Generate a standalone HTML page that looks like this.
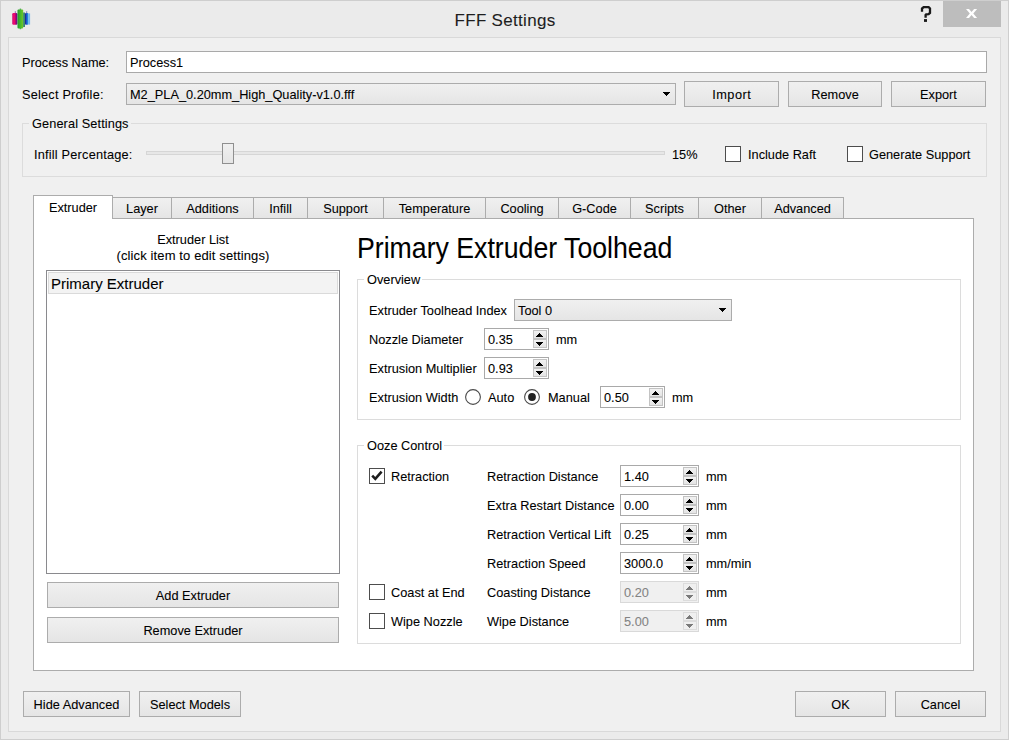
<!DOCTYPE html>
<html><head><meta charset="utf-8"><style>
html,body{margin:0;padding:0;width:1009px;height:740px;overflow:hidden;background:#ebebeb}
body{position:relative;font-family:'Liberation Sans', sans-serif;color:#000}
body>div{position:absolute}
.t{position:absolute;white-space:nowrap;line-height:1;font-size:12.75px;-webkit-text-stroke:0.08px currentColor}
</style></head><body>
<div style="left:0px;top:0px;width:1009px;height:740px;box-sizing:border-box;border:1px solid #cecece;background:#ebebeb;"></div>
<div style="left:8px;top:37px;width:993px;height:695px;box-sizing:border-box;border:1px solid #d9d9d9;background:#f0f0f0;"></div>
<svg style="position:absolute;left:0;top:0" width="40" height="32"><defs><linearGradient id="gp" x1="0" x2="1"><stop offset="0" stop-color="#d0187a"/><stop offset="0.45" stop-color="#f0066a"/><stop offset="0.7" stop-color="#a0087a"/><stop offset="1" stop-color="#50088a"/></linearGradient><linearGradient id="gg" x1="0" x2="1"><stop offset="0" stop-color="#1f9a2a"/><stop offset="0.5" stop-color="#46b82c"/><stop offset="1" stop-color="#70c828"/></linearGradient><linearGradient id="gb" x1="0" x2="1"><stop offset="0" stop-color="#1a1890"/><stop offset="0.5" stop-color="#2060d0"/><stop offset="1" stop-color="#20a8f0"/></linearGradient></defs><rect x="12.2" y="13" width="5.2" height="11.8" rx="1.2" fill="url(#gp)"/><rect x="14.8" y="11.2" width="1" height="2" fill="#9a60b0"/><rect x="17.5" y="9.6" width="5.7" height="18.8" rx="1" fill="url(#gg)"/><rect x="19.7" y="8.6" width="1.4" height="1.2" fill="#40a840"/><rect x="19.7" y="28.2" width="1.4" height="1" fill="#40a840"/><rect x="23.1" y="12.5" width="1.9" height="14.5" fill="#3a8a6a"/><rect x="25" y="13" width="3.5" height="11.8" rx="1" fill="url(#gb)"/><rect x="26.2" y="11.2" width="1" height="2" fill="#7a80c0"/><rect x="28.4" y="13.4" width="1.7" height="11.2" fill="#78b8ea"/></svg>
<div class="t" style="left:405px;top:12px;width:200px;text-align:center;font-size:17px;color:#1e1e1e;letter-spacing:0.3px">FFF Settings</div>
<svg style="position:absolute;left:900px;top:0" width="40" height="30"><path d="M922 11.8 L922 8.6 L923.6 7.1 L928.6 7.1 L930 8.5 L930 12.9 L928.6 14.2 L926.2 14.4 L925.6 15 L925.6 17.7" transform="translate(-900 0)" fill="none" stroke="#1a1a1a" stroke-width="2.3"/><rect x="24" y="19.1" width="3" height="2.8" fill="#1a1a1a"/></svg>
<div style="left:943px;top:1px;width:58px;height:26px;background:#bdbdbd;"></div>
<svg style="position:absolute;left:943px;top:0px" width="58" height="28"><path transform="translate(-943 0)" d="M966 8.9 L969 8.9 L971.55 11.9 L974.1 8.9 L977.1 8.9 L973.3 13.45 L977.1 18 L974.1 18 L971.55 15 L969 18 L966 18 L969.8 13.45Z" fill="#fff"/></svg>
<div class="t" style="left:22px;top:57px;font-size:12.75px;color:#000;">Process Name:</div>
<div style="left:126px;top:51px;width:861px;height:22px;box-sizing:border-box;border:1px solid #a9a9a9;background:#fff;"></div>
<div class="t" style="left:130px;top:57px;font-size:12.75px;color:#000;">Process1</div>
<div class="t" style="left:22px;top:89px;font-size:12.75px;color:#000;letter-spacing:0.2px">Select Profile:</div>
<div style="left:126px;top:83px;width:550px;height:22px;box-sizing:border-box;border:1px solid #acacac;background:linear-gradient(#f0f0f0,#e5e5e5);"></div>
<div class="t" style="left:130px;top:89px;font-size:12.75px;color:#000;">M2_PLA_0.20mm_High_Quality-v1.0.fff</div>
<svg style="position:absolute;left:663px;top:92px" width="7" height="4" shape-rendering="crispEdges"><path d="M0 0h7v1h-7z M1 1h5v1h-5z M2 2h3v1h-3z M3 3h1v1h-1z" fill="#000"/></svg>
<div style="left:684px;top:81px;width:95px;height:26px;box-sizing:border-box;border:1px solid #acacac;background:linear-gradient(#f0f0f0,#e5e5e5);"></div>
<div class="t" style="left:684px;top:89px;width:95px;text-align:center;font-size:12.75px;color:#000;letter-spacing:0.5px;text-indent:0.5px">Import</div>
<div style="left:788px;top:81px;width:94px;height:26px;box-sizing:border-box;border:1px solid #acacac;background:linear-gradient(#f0f0f0,#e5e5e5);"></div>
<div class="t" style="left:788px;top:89px;width:94px;text-align:center;font-size:12.75px;color:#000;">Remove</div>
<div style="left:891px;top:81px;width:95px;height:26px;box-sizing:border-box;border:1px solid #acacac;background:linear-gradient(#f0f0f0,#e5e5e5);"></div>
<div class="t" style="left:891px;top:89px;width:95px;text-align:center;font-size:12.75px;color:#000;">Export</div>
<div style="left:22px;top:123px;width:965px;height:54px;box-sizing:border-box;border:1px solid #dcdcdc;"></div>
<div class="t" style="left:29px;top:118px;padding:0 2px 0 3px;font-size:12.75px;letter-spacing:0.1px;background:#f0f0f0">General Settings</div>
<div class="t" style="left:34px;top:149px;font-size:12.75px;color:#000;letter-spacing:0.2px">Infill Percentage:</div>
<div style="left:146px;top:151px;width:519px;height:4px;box-sizing:border-box;border:1px solid #d6d6d6;background:#e7e7e7;"></div>
<div style="left:222px;top:143px;width:12px;height:21px;box-sizing:border-box;border:1px solid #8f8f8f;background:linear-gradient(#f0f0f0,#e5e5e5);"></div>
<div class="t" style="left:672px;top:149px;font-size:12.75px;color:#000;">15%</div>
<div style="left:725px;top:146px;width:16px;height:16px;box-sizing:border-box;border:1px solid #4d4d4d;background:#fff;"></div>
<div class="t" style="left:748px;top:149px;font-size:12.75px;color:#000;">Include Raft</div>
<div style="left:847px;top:146px;width:16px;height:16px;box-sizing:border-box;border:1px solid #4d4d4d;background:#fff;"></div>
<div class="t" style="left:869px;top:149px;font-size:12.75px;color:#000;">Generate Support</div>
<div style="left:33px;top:218px;width:941px;height:453px;box-sizing:border-box;border:1px solid #acacac;background:#fff;"></div>
<div style="left:112px;top:197px;width:60px;height:22px;box-sizing:border-box;border:1px solid #acacac;background:linear-gradient(#f0f0f0,#e5e5e5);"></div>
<div class="t" style="left:112px;top:203px;width:60px;text-align:center;font-size:12.75px;color:#000;">Layer</div>
<div style="left:171px;top:197px;width:83px;height:22px;box-sizing:border-box;border:1px solid #acacac;background:linear-gradient(#f0f0f0,#e5e5e5);"></div>
<div class="t" style="left:171px;top:203px;width:83px;text-align:center;font-size:12.75px;color:#000;">Additions</div>
<div style="left:253px;top:197px;width:55px;height:22px;box-sizing:border-box;border:1px solid #acacac;background:linear-gradient(#f0f0f0,#e5e5e5);"></div>
<div class="t" style="left:253px;top:203px;width:55px;text-align:center;font-size:12.75px;color:#000;">Infill</div>
<div style="left:307px;top:197px;width:77px;height:22px;box-sizing:border-box;border:1px solid #acacac;background:linear-gradient(#f0f0f0,#e5e5e5);"></div>
<div class="t" style="left:307px;top:203px;width:77px;text-align:center;font-size:12.75px;color:#000;">Support</div>
<div style="left:383px;top:197px;width:103px;height:22px;box-sizing:border-box;border:1px solid #acacac;background:linear-gradient(#f0f0f0,#e5e5e5);"></div>
<div class="t" style="left:383px;top:203px;width:103px;text-align:center;font-size:12.75px;color:#000;">Temperature</div>
<div style="left:485px;top:197px;width:74px;height:22px;box-sizing:border-box;border:1px solid #acacac;background:linear-gradient(#f0f0f0,#e5e5e5);"></div>
<div class="t" style="left:485px;top:203px;width:74px;text-align:center;font-size:12.75px;color:#000;">Cooling</div>
<div style="left:558px;top:197px;width:73px;height:22px;box-sizing:border-box;border:1px solid #acacac;background:linear-gradient(#f0f0f0,#e5e5e5);"></div>
<div class="t" style="left:558px;top:203px;width:73px;text-align:center;font-size:12.75px;color:#000;">G-Code</div>
<div style="left:630px;top:197px;width:69px;height:22px;box-sizing:border-box;border:1px solid #acacac;background:linear-gradient(#f0f0f0,#e5e5e5);"></div>
<div class="t" style="left:630px;top:203px;width:69px;text-align:center;font-size:12.75px;color:#000;">Scripts</div>
<div style="left:698px;top:197px;width:64px;height:22px;box-sizing:border-box;border:1px solid #acacac;background:linear-gradient(#f0f0f0,#e5e5e5);"></div>
<div class="t" style="left:698px;top:203px;width:64px;text-align:center;font-size:12.75px;color:#000;">Other</div>
<div style="left:761px;top:197px;width:83px;height:22px;box-sizing:border-box;border:1px solid #acacac;background:linear-gradient(#f0f0f0,#e5e5e5);"></div>
<div class="t" style="left:761px;top:203px;width:83px;text-align:center;font-size:12.75px;color:#000;">Advanced</div>
<div style="left:33px;top:195px;width:80px;height:24px;box-sizing:border-box;border:1px solid #acacac;border-bottom:none;background:#fff;"></div>
<div class="t" style="left:33px;top:202px;width:80px;text-align:center;font-size:12.75px;color:#000;">Extruder</div>
<div class="t" style="left:93px;top:234px;width:200px;text-align:center;font-size:12.75px;color:#000;">Extruder List</div>
<div class="t" style="left:93px;top:249px;width:200px;text-align:center;font-size:13px;color:#000;letter-spacing:0.12px">(click item to edit settings)</div>
<div style="left:46px;top:270px;width:294px;height:304px;box-sizing:border-box;border:1px solid #8a8a8e;background:#fff;"></div>
<div style="left:48px;top:272px;width:290px;height:22px;box-sizing:border-box;border:1px solid #dadada;background:#f3f3f3;"></div>
<div class="t" style="left:51px;top:276px;font-size:15px;color:#000;">Primary Extruder</div>
<div style="left:47px;top:582px;width:292px;height:26px;box-sizing:border-box;border:1px solid #acacac;background:linear-gradient(#f0f0f0,#e5e5e5);"></div>
<div class="t" style="left:47px;top:590px;width:292px;text-align:center;font-size:12.75px;color:#000;">Add Extruder</div>
<div style="left:47px;top:617px;width:292px;height:26px;box-sizing:border-box;border:1px solid #acacac;background:linear-gradient(#f0f0f0,#e5e5e5);"></div>
<div class="t" style="left:47px;top:625px;width:292px;text-align:center;font-size:12.75px;color:#000;">Remove Extruder</div>
<div class="t" style="left:357px;top:234px;font-size:29px;color:#000;transform:scaleX(0.92);transform-origin:0 0;">Primary Extruder Toolhead</div>
<div style="left:357px;top:279px;width:604px;height:141px;box-sizing:border-box;border:1px solid #dcdcdc;"></div>
<div class="t" style="left:364px;top:274px;padding:0 2px 0 3px;font-size:12.75px;letter-spacing:0px;background:#fff">Overview</div>
<div class="t" style="left:369px;top:305px;font-size:12.75px;color:#000;">Extruder Toolhead Index</div>
<div style="left:514px;top:299px;width:218px;height:22px;box-sizing:border-box;border:1px solid #acacac;background:linear-gradient(#f0f0f0,#e5e5e5);"></div>
<div class="t" style="left:518px;top:305px;font-size:12.75px;color:#000;">Tool 0</div>
<svg style="position:absolute;left:719px;top:308px" width="7" height="4" shape-rendering="crispEdges"><path d="M0 0h7v1h-7z M1 1h5v1h-5z M2 2h3v1h-3z M3 3h1v1h-1z" fill="#000"/></svg>
<div class="t" style="left:369px;top:334px;font-size:12.75px;color:#000;">Nozzle Diameter</div>
<div style="left:484px;top:328px;width:65px;height:22px;box-sizing:border-box;border:1px solid #a9a9a9;background:#fff;"></div>
<div style="left:533px;top:330px;width:14px;height:9px;box-sizing:border-box;border:1px solid #c3c3c3;background:linear-gradient(#f2f2f2,#e4e4e4);"></div>
<div style="left:533px;top:339px;width:14px;height:9px;box-sizing:border-box;border:1px solid #c3c3c3;background:linear-gradient(#f2f2f2,#e4e4e4);"></div>
<svg style="position:absolute;left:536px;top:333px" width="7" height="13" shape-rendering="crispEdges"><path d="M3 0h1v1h-1z M2 1h3v1h-3z M1 2h5v1h-5z M0 3h7v1h-7z M0 9h7v1h-7z M1 10h5v1h-5z M2 11h3v1h-3z M3 12h1v1h-1z" fill="#000"/></svg>
<div class="t" style="left:488px;top:334px;font-size:12.75px;color:#000;">0.35</div>
<div class="t" style="left:556px;top:334px;font-size:12.75px;color:#000;">mm</div>
<div class="t" style="left:369px;top:363px;font-size:12.75px;color:#000;">Extrusion Multiplier</div>
<div style="left:484px;top:357px;width:65px;height:22px;box-sizing:border-box;border:1px solid #a9a9a9;background:#fff;"></div>
<div style="left:533px;top:359px;width:14px;height:9px;box-sizing:border-box;border:1px solid #c3c3c3;background:linear-gradient(#f2f2f2,#e4e4e4);"></div>
<div style="left:533px;top:368px;width:14px;height:9px;box-sizing:border-box;border:1px solid #c3c3c3;background:linear-gradient(#f2f2f2,#e4e4e4);"></div>
<svg style="position:absolute;left:536px;top:362px" width="7" height="13" shape-rendering="crispEdges"><path d="M3 0h1v1h-1z M2 1h3v1h-3z M1 2h5v1h-5z M0 3h7v1h-7z M0 9h7v1h-7z M1 10h5v1h-5z M2 11h3v1h-3z M3 12h1v1h-1z" fill="#000"/></svg>
<div class="t" style="left:488px;top:363px;font-size:12.75px;color:#000;">0.93</div>
<div class="t" style="left:369px;top:392px;font-size:12.75px;color:#000;">Extrusion Width</div>
<svg style="position:absolute;left:465px;top:389px" width="16" height="16" viewBox="0 0 16 16"><circle cx="8" cy="8" r="7.4" fill="#fff" stroke="#4a4a4a" stroke-width="1.1"/></svg>
<div class="t" style="left:488px;top:392px;font-size:12.75px;color:#000;">Auto</div>
<svg style="position:absolute;left:524px;top:389px" width="16" height="16" viewBox="0 0 16 16"><circle cx="8" cy="8" r="7.4" fill="#fff" stroke="#4a4a4a" stroke-width="1.1"/><circle cx="8" cy="8" r="3.9" fill="#222"/></svg>
<div class="t" style="left:548px;top:392px;font-size:12.75px;color:#000;">Manual</div>
<div style="left:600px;top:386px;width:65px;height:22px;box-sizing:border-box;border:1px solid #a9a9a9;background:#fff;"></div>
<div style="left:649px;top:388px;width:14px;height:9px;box-sizing:border-box;border:1px solid #c3c3c3;background:linear-gradient(#f2f2f2,#e4e4e4);"></div>
<div style="left:649px;top:397px;width:14px;height:9px;box-sizing:border-box;border:1px solid #c3c3c3;background:linear-gradient(#f2f2f2,#e4e4e4);"></div>
<svg style="position:absolute;left:652px;top:391px" width="7" height="13" shape-rendering="crispEdges"><path d="M3 0h1v1h-1z M2 1h3v1h-3z M1 2h5v1h-5z M0 3h7v1h-7z M0 9h7v1h-7z M1 10h5v1h-5z M2 11h3v1h-3z M3 12h1v1h-1z" fill="#000"/></svg>
<div class="t" style="left:604px;top:392px;font-size:12.75px;color:#000;">0.50</div>
<div class="t" style="left:672px;top:392px;font-size:12.75px;color:#000;">mm</div>
<div style="left:357px;top:445px;width:604px;height:199px;box-sizing:border-box;border:1px solid #dcdcdc;"></div>
<div class="t" style="left:364px;top:440px;padding:0 2px 0 3px;font-size:12.75px;letter-spacing:0px;background:#fff">Ooze Control</div>
<div style="left:369px;top:468px;width:16px;height:16px;box-sizing:border-box;border:1px solid #4d4d4d;background:#fff;"></div>
<svg style="position:absolute;left:369px;top:468px" width="16" height="16" viewBox="0 0 16 16"><path d="M3.2 7.6 L6.3 10.8 L12.6 3.6" fill="none" stroke="#1e1e1e" stroke-width="2.6"/></svg>
<div class="t" style="left:391px;top:471px;font-size:12.75px;color:#000;">Retraction</div>
<div class="t" style="left:487px;top:471px;font-size:12.75px;color:#000;">Retraction Distance</div>
<div style="left:620px;top:465px;width:79px;height:22px;box-sizing:border-box;border:1px solid #a9a9a9;background:#fff;"></div>
<div style="left:683px;top:467px;width:14px;height:9px;box-sizing:border-box;border:1px solid #c3c3c3;background:linear-gradient(#f2f2f2,#e4e4e4);"></div>
<div style="left:683px;top:476px;width:14px;height:9px;box-sizing:border-box;border:1px solid #c3c3c3;background:linear-gradient(#f2f2f2,#e4e4e4);"></div>
<svg style="position:absolute;left:686px;top:470px" width="7" height="13" shape-rendering="crispEdges"><path d="M3 0h1v1h-1z M2 1h3v1h-3z M1 2h5v1h-5z M0 3h7v1h-7z M0 9h7v1h-7z M1 10h5v1h-5z M2 11h3v1h-3z M3 12h1v1h-1z" fill="#000"/></svg>
<div class="t" style="left:624px;top:471px;font-size:12.75px;color:#000;">1.40</div>
<div class="t" style="left:706px;top:471px;font-size:12.75px;color:#000;">mm</div>
<div class="t" style="left:487px;top:500px;font-size:12.75px;color:#000;">Extra Restart Distance</div>
<div style="left:620px;top:494px;width:79px;height:22px;box-sizing:border-box;border:1px solid #a9a9a9;background:#fff;"></div>
<div style="left:683px;top:496px;width:14px;height:9px;box-sizing:border-box;border:1px solid #c3c3c3;background:linear-gradient(#f2f2f2,#e4e4e4);"></div>
<div style="left:683px;top:505px;width:14px;height:9px;box-sizing:border-box;border:1px solid #c3c3c3;background:linear-gradient(#f2f2f2,#e4e4e4);"></div>
<svg style="position:absolute;left:686px;top:499px" width="7" height="13" shape-rendering="crispEdges"><path d="M3 0h1v1h-1z M2 1h3v1h-3z M1 2h5v1h-5z M0 3h7v1h-7z M0 9h7v1h-7z M1 10h5v1h-5z M2 11h3v1h-3z M3 12h1v1h-1z" fill="#000"/></svg>
<div class="t" style="left:624px;top:500px;font-size:12.75px;color:#000;">0.00</div>
<div class="t" style="left:706px;top:500px;font-size:12.75px;color:#000;">mm</div>
<div class="t" style="left:487px;top:529px;font-size:12.75px;color:#000;">Retraction Vertical Lift</div>
<div style="left:620px;top:523px;width:79px;height:22px;box-sizing:border-box;border:1px solid #a9a9a9;background:#fff;"></div>
<div style="left:683px;top:525px;width:14px;height:9px;box-sizing:border-box;border:1px solid #c3c3c3;background:linear-gradient(#f2f2f2,#e4e4e4);"></div>
<div style="left:683px;top:534px;width:14px;height:9px;box-sizing:border-box;border:1px solid #c3c3c3;background:linear-gradient(#f2f2f2,#e4e4e4);"></div>
<svg style="position:absolute;left:686px;top:528px" width="7" height="13" shape-rendering="crispEdges"><path d="M3 0h1v1h-1z M2 1h3v1h-3z M1 2h5v1h-5z M0 3h7v1h-7z M0 9h7v1h-7z M1 10h5v1h-5z M2 11h3v1h-3z M3 12h1v1h-1z" fill="#000"/></svg>
<div class="t" style="left:624px;top:529px;font-size:12.75px;color:#000;">0.25</div>
<div class="t" style="left:706px;top:529px;font-size:12.75px;color:#000;">mm</div>
<div class="t" style="left:487px;top:558px;font-size:12.75px;color:#000;">Retraction Speed</div>
<div style="left:620px;top:552px;width:79px;height:22px;box-sizing:border-box;border:1px solid #a9a9a9;background:#fff;"></div>
<div style="left:683px;top:554px;width:14px;height:9px;box-sizing:border-box;border:1px solid #c3c3c3;background:linear-gradient(#f2f2f2,#e4e4e4);"></div>
<div style="left:683px;top:563px;width:14px;height:9px;box-sizing:border-box;border:1px solid #c3c3c3;background:linear-gradient(#f2f2f2,#e4e4e4);"></div>
<svg style="position:absolute;left:686px;top:557px" width="7" height="13" shape-rendering="crispEdges"><path d="M3 0h1v1h-1z M2 1h3v1h-3z M1 2h5v1h-5z M0 3h7v1h-7z M0 9h7v1h-7z M1 10h5v1h-5z M2 11h3v1h-3z M3 12h1v1h-1z" fill="#000"/></svg>
<div class="t" style="left:624px;top:558px;font-size:12.75px;color:#000;">3000.0</div>
<div class="t" style="left:706px;top:558px;font-size:12.75px;color:#000;">mm/min</div>
<div class="t" style="left:487px;top:587px;font-size:12.75px;color:#000;">Coasting Distance</div>
<div style="left:620px;top:581px;width:79px;height:22px;box-sizing:border-box;border:1px solid #d9d9d9;background:#f0f0f0;"></div>
<div style="left:683px;top:583px;width:14px;height:9px;box-sizing:border-box;border:1px solid #dcdcdc;background:#efefef;"></div>
<div style="left:683px;top:592px;width:14px;height:9px;box-sizing:border-box;border:1px solid #dcdcdc;background:#efefef;"></div>
<svg style="position:absolute;left:686px;top:586px" width="7" height="13" shape-rendering="crispEdges"><path d="M3 0h1v1h-1z M2 1h3v1h-3z M1 2h5v1h-5z M0 3h7v1h-7z M0 9h7v1h-7z M1 10h5v1h-5z M2 11h3v1h-3z M3 12h1v1h-1z" fill="#7a7a7a"/></svg>
<div class="t" style="left:624px;top:587px;font-size:12.75px;color:#838383;">0.20</div>
<div class="t" style="left:706px;top:587px;font-size:12.75px;color:#000;">mm</div>
<div class="t" style="left:487px;top:616px;font-size:12.75px;color:#000;">Wipe Distance</div>
<div style="left:620px;top:610px;width:79px;height:22px;box-sizing:border-box;border:1px solid #d9d9d9;background:#f0f0f0;"></div>
<div style="left:683px;top:612px;width:14px;height:9px;box-sizing:border-box;border:1px solid #dcdcdc;background:#efefef;"></div>
<div style="left:683px;top:621px;width:14px;height:9px;box-sizing:border-box;border:1px solid #dcdcdc;background:#efefef;"></div>
<svg style="position:absolute;left:686px;top:615px" width="7" height="13" shape-rendering="crispEdges"><path d="M3 0h1v1h-1z M2 1h3v1h-3z M1 2h5v1h-5z M0 3h7v1h-7z M0 9h7v1h-7z M1 10h5v1h-5z M2 11h3v1h-3z M3 12h1v1h-1z" fill="#7a7a7a"/></svg>
<div class="t" style="left:624px;top:616px;font-size:12.75px;color:#838383;">5.00</div>
<div class="t" style="left:706px;top:616px;font-size:12.75px;color:#000;">mm</div>
<div style="left:369px;top:584px;width:16px;height:16px;box-sizing:border-box;border:1px solid #4d4d4d;background:#fff;"></div>
<div class="t" style="left:391px;top:587px;font-size:12.75px;color:#000;">Coast at End</div>
<div style="left:369px;top:613px;width:16px;height:16px;box-sizing:border-box;border:1px solid #4d4d4d;background:#fff;"></div>
<div class="t" style="left:391px;top:616px;font-size:12.75px;color:#000;">Wipe Nozzle</div>
<div style="left:23px;top:691px;width:107px;height:26px;box-sizing:border-box;border:1px solid #acacac;background:linear-gradient(#f0f0f0,#e5e5e5);"></div>
<div class="t" style="left:23px;top:699px;width:107px;text-align:center;font-size:12.75px;color:#000;">Hide Advanced</div>
<div style="left:139px;top:691px;width:102px;height:26px;box-sizing:border-box;border:1px solid #acacac;background:linear-gradient(#f0f0f0,#e5e5e5);"></div>
<div class="t" style="left:139px;top:699px;width:102px;text-align:center;font-size:12.75px;color:#000;">Select Models</div>
<div style="left:795px;top:691px;width:91px;height:26px;box-sizing:border-box;border:1px solid #acacac;background:linear-gradient(#f0f0f0,#e5e5e5);"></div>
<div class="t" style="left:795px;top:699px;width:91px;text-align:center;font-size:12.75px;color:#000;">OK</div>
<div style="left:895px;top:691px;width:91px;height:26px;box-sizing:border-box;border:1px solid #acacac;background:linear-gradient(#f0f0f0,#e5e5e5);"></div>
<div class="t" style="left:895px;top:699px;width:91px;text-align:center;font-size:12.75px;color:#000;">Cancel</div>
</body></html>
